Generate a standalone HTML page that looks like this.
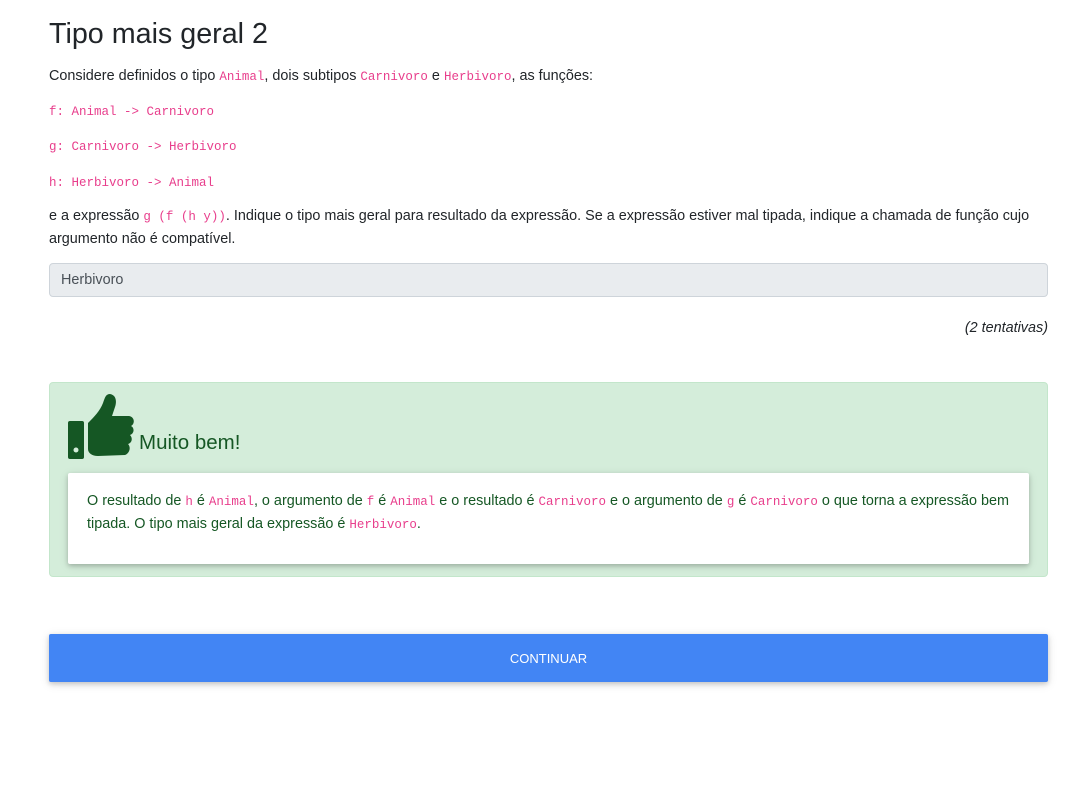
<!DOCTYPE html>
<html><head><meta charset="utf-8"><style>
body{margin:0;background:#fff;font-family:"Liberation Sans",sans-serif;color:#212529;font-size:14.4px;}
.wrap{position:absolute;left:49px;width:999px;top:0}
h1{font-weight:400;font-size:28.7px;margin:0;position:absolute;top:16px;line-height:36px}
code{font-family:"Liberation Mono",monospace;font-size:12.5px;color:#e83e8c}
.p{position:absolute;left:0;line-height:22px;margin:0;width:999px}
.inp{position:absolute;top:263px;left:0;width:997px;height:32px;background:#e9ecef;border:1px solid #ced4da;border-radius:4px}
.inp span{position:absolute;left:11px;top:8px;color:#495057;font-size:14.4px}
.tent{position:absolute;top:320px;right:0;font-style:italic}
.alert{position:absolute;top:382px;left:0;width:997px;height:193px;background:#d4edda;border:1px solid #c3e6cb;border-radius:4px}
.card{position:absolute;left:18px;top:90px;width:961px;height:91px;background:#fff;box-shadow:0 2px 5px rgba(0,0,0,.2),0 2px 10px rgba(0,0,0,.1);border-radius:2px}
.card div{position:absolute;left:19px;top:17px;right:15px;line-height:22px;color:#155724;font-size:14.4px}
.btn{position:absolute;top:634px;left:0;width:999px;height:48px;background:#4285f4;color:#fff;font-size:13px;text-align:center;line-height:49px;border-radius:2px;box-shadow:0 2px 5px rgba(0,0,0,.16),0 2px 10px rgba(0,0,0,.12)}
</style></head><body><div class="wrap">
<h1>Tipo mais geral 2</h1>
<p class="p" style="top:65px">Considere definidos o tipo <code>Animal</code>, dois subtipos <code>Carnivoro</code> e <code>Herbivoro</code>, as funções:</p>
<p class="p" style="top:100px"><code>f: Animal -&gt; Carnivoro</code></p>
<p class="p" style="top:135px"><code>g: Carnivoro -&gt; Herbivoro</code></p>
<p class="p" style="top:171px"><code>h: Herbivoro -&gt; Animal</code></p>
<p class="p" style="top:205px">e a expressão <code>g (f (h y))</code>. Indique o tipo mais geral para resultado da expressão. Se a expressão estiver mal tipada, indique a chamada de função cujo argumento não é compatível.</p>
<div class="inp"><span>Herbivoro</span></div>
<div class="tent">(2 tentativas)</div>
<div class="alert">
<svg style="position:absolute;left:18px;top:10px" width="67" height="67" viewBox="0 0 67 67"><rect x="0" y="28" width="16" height="38" rx="2" fill="#155724"/><circle cx="8" cy="57" r="2.5" fill="#d4edda"/><path d="M20 30 C26 24 32 18 35 10 C37 4 38 1 42 1 C48 2 49 8 47 14 L44 23 L61 23 C67 24 67 31 63 33 C67 35 66 41 62 42 C65 45 64 50 60 51 C63 54 62 60 57 62 L30 63 C24 63 20 60 20 56 Z" fill="#155724"/></svg>
<div style="position:absolute;left:89px;top:48px;font-size:20.5px;color:#155724">Muito bem!</div>
<div class="card"><div>O resultado de <code>h</code> é <code>Animal</code>, o argumento de <code>f</code> é <code>Animal</code> e o resultado é <code>Carnivoro</code> e o argumento de <code>g</code> é <code>Carnivoro</code> o que torna a expressão bem tipada. O tipo mais geral da expressão é <code>Herbivoro</code>.</div></div>
</div>
<div class="btn">CONTINUAR</div>
</div></body></html>
